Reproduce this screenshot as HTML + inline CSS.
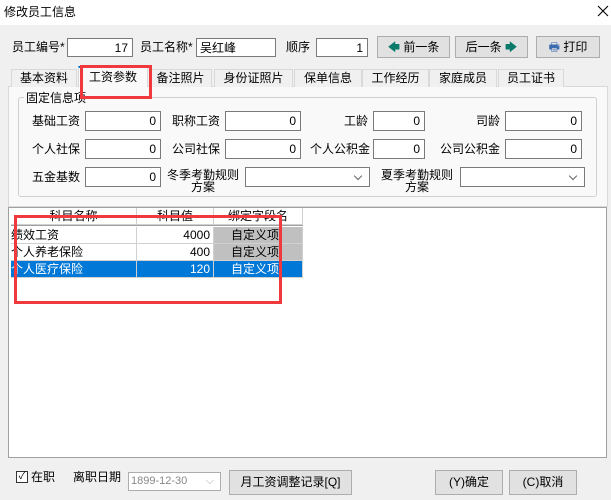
<!DOCTYPE html>
<html><head><meta charset="utf-8"><style>
*{margin:0;padding:0;box-sizing:border-box}
body{width:611px;height:500px;background:#f0f0f0;font-family:"Liberation Sans","Noto Sans CJK SC",sans-serif;font-size:12px;color:#000;position:relative;overflow:hidden}
.a{position:absolute;white-space:nowrap}
.in{position:absolute;background:#fff;border:1px solid #7a7a7a;text-align:right;padding-right:4px;line-height:18px}
.btn{position:absolute;background:#e1e1e1;border:1px solid #adadad;text-align:center}
.tab{position:absolute;top:69px;height:18px;border:1px solid #d9d9d9;border-bottom:none;background:#f0f0f0;text-align:center;line-height:16px;font-size:12px}
.lbl{position:absolute;line-height:20px;text-align:right}
.sel{position:absolute;background:#fff;border:1px solid #7a7a7a}
.sel:after{content:"";position:absolute;right:8px;top:5px;width:5px;height:5px;border-right:1px solid #666;border-bottom:1px solid #666;transform:rotate(45deg)}
.cell{position:absolute;height:17px;line-height:16px;border-right:1px solid #d0d0d0;border-bottom:1px solid #d0d0d0}
.red{position:absolute;border:3px solid #f0393d}
</style></head><body>
<div class="a" style="left:0;top:0;width:611px;height:25px;background:#fff"></div>
<div class="a" style="left:4px;top:3px;font-size:12px">修改员工信息</div>
<svg class="a" style="left:597px;top:5px" width="12" height="12" viewBox="0 0 12 12"><path d="M1 1L11 11M11 1L1 11" stroke="#000" stroke-width="1.1"/></svg>

<div class="a" style="left:12px;top:38px;line-height:19px">员工编号*</div>
<div class="in" style="left:67px;top:38px;width:66px;height:19px">17</div>
<div class="a" style="left:140px;top:38px;line-height:19px">员工名称*</div>
<div class="in" style="left:196px;top:38px;width:80px;height:19px;text-align:left;padding-left:3px">吴红峰</div>
<div class="a" style="left:286px;top:38px;line-height:19px">顺序</div>
<div class="in" style="left:316px;top:38px;width:52px;height:19px">1</div>
<div class="btn" style="left:377px;top:36px;width:73px;height:22px;line-height:20px"><span style="color:#0a7a6a">🡄</span> 前一条</div>
<div class="btn" style="left:455px;top:36px;width:73px;height:22px;line-height:20px">后一条 <span style="color:#0a7a6a">🡆</span></div>
<div class="btn" style="left:536px;top:36px;width:64px;height:22px;line-height:20px"><span style="color:#3a6ab0">🖶</span> 打印</div>

<div class="a" style="left:8px;top:86px;width:600px;height:121px;border:1px solid #d9d9d9;background:#f9f9f9"></div>
<div class="tab" style="left:11px;width:66px">基本资料</div>
<div class="tab" style="left:78px;width:70px;top:66px;height:21px;background:#f9f9f9;border-top:2px solid #0078d7;line-height:18px">工资参数</div>
<div class="tab" style="left:149px;width:63px">备注照片</div>
<div class="tab" style="left:214px;width:79px">身份证照片</div>
<div class="tab" style="left:294px;width:68px">保单信息</div>
<div class="tab" style="left:362px;width:67px">工作经历</div>
<div class="tab" style="left:429px;width:68px">家庭成员</div>
<div class="tab" style="left:498px;width:66px">员工证书</div>

<div class="a" style="left:18px;top:97px;width:579px;height:100px;border:1px solid #d0d0d0;border-radius:3px"></div>
<div class="a" style="left:24px;top:89px;background:#f9f9f9;padding:0 2px">固定信息项</div>

<div class="lbl" style="left:20px;top:111px;width:60px">基础工资</div>
<div class="in" style="left:85px;top:111px;width:76px;height:20px">0</div>
<div class="lbl" style="left:160px;top:111px;width:60px">职称工资</div>
<div class="in" style="left:225px;top:111px;width:76px;height:20px">0</div>
<div class="lbl" style="left:308px;top:111px;width:60px">工龄</div>
<div class="in" style="left:373px;top:111px;width:52px;height:20px">0</div>
<div class="lbl" style="left:440px;top:111px;width:60px">司龄</div>
<div class="in" style="left:505px;top:111px;width:77px;height:20px">0</div>

<div class="lbl" style="left:20px;top:139px;width:60px">个人社保</div>
<div class="in" style="left:85px;top:139px;width:76px;height:20px">0</div>
<div class="lbl" style="left:160px;top:139px;width:60px">公司社保</div>
<div class="in" style="left:225px;top:139px;width:76px;height:20px">0</div>
<div class="lbl" style="left:300px;top:139px;width:70px">个人公积金</div>
<div class="in" style="left:373px;top:139px;width:52px;height:20px">0</div>
<div class="lbl" style="left:430px;top:139px;width:70px">公司公积金</div>
<div class="in" style="left:505px;top:139px;width:77px;height:20px">0</div>

<div class="lbl" style="left:20px;top:167px;width:60px">五金基数</div>
<div class="in" style="left:85px;top:167px;width:76px;height:20px">0</div>
<div class="a" style="left:166px;top:169px;line-height:12px;text-align:center;width:74px">冬季考勤规则<br>方案</div>
<div class="sel" style="left:245px;top:167px;width:125px;height:20px"></div>
<div class="a" style="left:380px;top:169px;line-height:12px;text-align:center;width:74px">夏季考勤规则<br>方案</div>
<div class="sel" style="left:460px;top:167px;width:125px;height:20px"></div>

<div class="a" style="left:8px;top:207px;width:599px;height:251px;background:#fff;border:1px solid #a0a0a0"></div>
<div class="cell" style="left:11px;top:208px;width:126px;text-align:center;background:#fff">科目名称</div>
<div class="cell" style="left:137px;top:208px;width:77px;text-align:center;background:#fff">科目值</div>
<div class="cell" style="left:214px;top:208px;width:89px;text-align:center;background:#fff">绑定字段名</div>
<div class="a" style="left:11px;top:225px;width:292px;height:1px;background:#a0a0a0"></div>
<div class="cell" style="left:11px;top:227px;width:126px">绩效工资</div>
<div class="cell" style="left:137px;top:227px;width:77px;text-align:right;padding-right:3px">4000</div>
<div class="cell" style="left:214px;top:227px;width:89px;background:#c0c0c0;padding-left:17px">自定义项</div>
<div class="cell" style="left:11px;top:244px;width:126px">个人养老保险</div>
<div class="cell" style="left:137px;top:244px;width:77px;text-align:right;padding-right:3px">400</div>
<div class="cell" style="left:214px;top:244px;width:89px;background:#c0c0c0;padding-left:17px">自定义项:</div>
<div class="cell" style="left:11px;top:261px;width:126px;background:#0078d7;color:#fff">个人医疗保险</div>
<div class="cell" style="left:137px;top:261px;width:77px;text-align:right;padding-right:3px;background:#0078d7;color:#fff">120</div>
<div class="cell" style="left:214px;top:261px;width:89px;background:#0078d7;color:#fff;padding-left:17px">自定义项:</div>

<div class="red" style="left:80px;top:65px;width:72px;height:34px"></div>
<div class="red" style="left:14px;top:215px;width:268px;height:89px"></div>

<div class="a" style="left:16px;top:471px;width:12px;height:12px;border:1px solid #333;background:#fff;font-size:10px;line-height:10px;text-align:center">✓</div>
<div class="a" style="left:31px;top:469px;line-height:16px">在职</div>
<div class="a" style="left:73px;top:469px;line-height:16px">离职日期</div>
<div class="a" style="left:128px;top:472px;width:93px;height:19px;background:#fff;border:1px solid #adadad;color:#888;font-size:11px;line-height:17px;padding-left:2px">1899-12-30<span style="position:absolute;right:6px;color:#aaa">⌵</span></div>
<div class="btn" style="left:229px;top:470px;width:123px;height:25px;line-height:23px">月工资调整记录[Q]</div>
<div class="btn" style="left:435px;top:470px;width:68px;height:25px;line-height:23px">(Y)确定</div>
<div class="btn" style="left:509px;top:470px;width:68px;height:25px;line-height:23px">(C)取消</div>
</body></html>
